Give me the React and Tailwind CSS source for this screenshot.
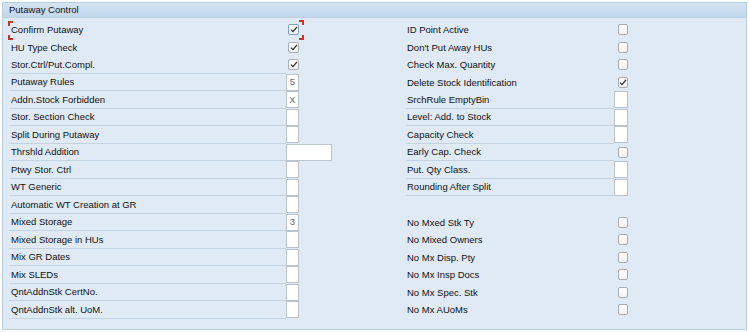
import React from "react";

const left = [
  { l: "Confirm Putaway", t: "cb", v: true, focus: true },
  { l: "HU Type Check", t: "cb", v: true },
  { l: "Stor.Ctrl/Put.Compl.", t: "cb", v: true, line: true },
  { l: "Putaway Rules", t: "in", v: "5", line: true },
  { l: "Addn.Stock Forbidden", t: "in", v: "X", line: true },
  { l: "Stor. Section Check", t: "in", v: "", line: true },
  { l: "Split During Putaway", t: "in", v: "", line: true },
  { l: "Thrshld Addition", t: "wide", v: "", line: true },
  { l: "Ptwy Stor. Ctrl", t: "in", v: "", line: true },
  { l: "WT Generic", t: "in", v: "", line: true },
  { l: "Automatic WT Creation at GR", t: "in", v: "", line: true },
  { l: "Mixed Storage", t: "in", v: "3", line: true },
  { l: "Mixed Storage in HUs", t: "in", v: "", line: true },
  { l: "Mix GR Dates", t: "in", v: "", line: true },
  { l: "Mix SLEDs", t: "in", v: "", line: true },
  { l: "QntAddnStk CertNo.", t: "in", v: "", line: true },
  { l: "QntAddnStk alt. UoM.", t: "in", v: "", line: true },
];

const right = [
  { l: "ID Point Active", t: "cb", v: false },
  { l: "Don't Put Away HUs", t: "cb", v: false },
  { l: "Check Max. Quantity", t: "cb", v: false },
  { l: "Delete Stock Identification", t: "cb", v: true },
  { l: "SrchRule EmptyBin", t: "in", v: "", line: true },
  { l: "Level: Add. to Stock", t: "in", v: "", line: true },
  { l: "Capacity Check", t: "in", v: "", line: true },
  { l: "Early Cap. Check", t: "cb", v: false, line: true },
  { l: "Put. Qty Class.", t: "in", v: "", line: true },
  { l: "Rounding After Split", t: "in", v: "", line: true },
  { l: "", t: "none" },
  { l: "No Mxed Stk Ty", t: "cb", v: false },
  { l: "No Mixed Owners", t: "cb", v: false },
  { l: "No Mx Disp. Pty", t: "cb", v: false },
  { l: "No Mx Insp Docs", t: "cb", v: false },
  { l: "No Mx Spec. Stk", t: "cb", v: false },
  { l: "No Mx AUoMs", t: "cb", v: false },
];

function Check({ on, focus }) {
  return (
    <div
      className={
        "w-[11px] h-[11px] rounded-[2px] border bg-gradient-to-b from-white to-[#eef2f6] flex items-center justify-center " +
        (focus ? "border-[#7f9fc4]" : "border-[#a9adb2]")
      }
    >
      {on && (
        <svg width="8" height="7" viewBox="0 0 8 7">
          <path d="M1 3.6 L3 5.6 L7 0.8" fill="none" stroke="#2b2b2b" strokeWidth="1.3" />
        </svg>
      )}
    </div>
  );
}

function Control({ r, side }) {
  if (r.t === "cb")
    return (
      <div className={side === "l" ? "w-[13px] pl-[2px] flex items-center" : "w-[14px] pl-[4px] flex items-center"}>
        <Check on={r.v} focus={r.focus} />
      </div>
    );
  if (r.t === "wide")
    return <div className="w-[46px] h-[17px] border border-[#bcc3ca] bg-white"></div>;
  if (r.t === "in")
    return (
      <div
        className={
          (side === "l" ? "w-[13px]" : "w-[14px]") +
          " h-[17px] border border-[#bcc3ca] bg-white flex items-center justify-center text-[#6a6a6a] text-[9.5px]"
        }
      >
        {r.v}
      </div>
    );
  return <div className="w-[14px]" />;
}

function Row({ r, side }) {
  return (
    <div className="h-[17.5px] flex items-center relative">
      <div
        className={
          (side === "l" ? "w-[277px] pl-[2px]" : "w-[208px] pl-[1px]") +
          " h-full flex items-center " +
          (r.line ? "border-b border-[#c4d3e1]" : "")
        }
      >
        <span className="leading-none">{r.l}</span>
      </div>
      <Control r={r} side={side} />
      {r.focus && (
        <>
          <div className="absolute left-[-1px] top-[0px] w-[5px] h-[5px] border-l-2 border-t-2 border-[#c8342b]" />
          <div className="absolute left-[-1px] bottom-[-1px] w-[5px] h-[5px] border-l-2 border-b-2 border-[#c8342b]" />
          <div className="absolute left-[290px] top-[-1px] w-[5px] h-[5px] border-r-2 border-t-2 border-[#c8342b]" />
          <div className="absolute left-[290px] bottom-[-1px] w-[5px] h-[5px] border-r-2 border-b-2 border-[#c8342b]" />
        </>
      )}
    </div>
  );
}

export default function App() {
  return (
    <div
      className="w-[749px] h-[332px] bg-white pt-[2px] pl-[2px]"
      style={{ fontFamily: '"Liberation Sans", Arial, sans-serif' }}
    >
      <div className="w-[745px] h-[328px] border border-[#b9cde2] bg-[#dfeaf5] text-[9.5px] text-[#111]">
        <div className="h-[15px] bg-gradient-to-b from-[#d3e3f2] to-[#c3d8ec] border-b border-[#bcd0e4] flex items-center pl-[6px]">
          Putaway Control
        </div>
        <div className="flex pt-[3px] pl-[6px]">
          <div className="w-[397px] flex flex-col">
            {left.map((r, i) => (
              <Row key={i} r={r} side="l" />
            ))}
          </div>
          <div className="flex flex-col">
            {right.map((r, i) => (
              <Row key={i} r={r} side="r" />
            ))}
          </div>
        </div>
      </div>
    </div>
  );
}
